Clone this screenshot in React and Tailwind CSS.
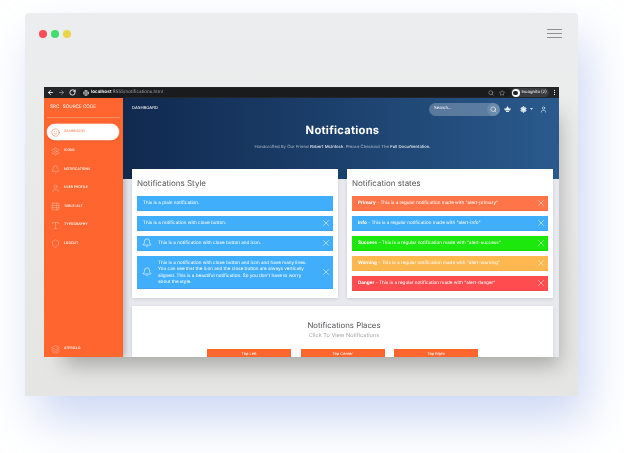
import React from "react";
import { ArrowLeft, ArrowRight, RotateCw, Search, Star, Bell, X, User, Settings, Smile, TableProperties, Type, Shield, Layers, Globe } from "lucide-react";

const nav = [
  [Settings, "ICONS"],
  [Bell, "NOTIFICATIONS"],
  [User, "USER PROFILE"],
  [TableProperties, "TABLE LIST"],
  [Type, "TYPOGRAPHY"],
  [Shield, "LOGOUT"],
];

const states = [
  ["Primary", "primary", "bg-[#ff7448]"],
  ["Info", "info", "bg-[#41aefc]"],
  ["Success", "success", "bg-[#1ce80e]"],
  ["Warning", "warning", "bg-[#ffb74f]"],
  ["Danger", "danger", "bg-[#ff4c4f]"],
];

function Alert({ color = "bg-[#41aefc]", icon, close = true, tall, children }) {
  return (
    <div className={`flex items-center text-white text-[4.6px] leading-[6.2px] ${color} ${tall ? "h-[33px]" : "h-[15px]"} border-b border-black/5 pr-[2px] ${icon ? "pl-[4.5px]" : "pl-[6px]"}`}>
      {icon && <Bell size={10} strokeWidth={1.5} className="mr-[6.5px] shrink-0" />}
      <div className="flex-1 whitespace-nowrap pt-[3px]">{children}</div>
      {close && <X size={10} strokeWidth={1.2} className="shrink-0" />}
    </div>
  );
}

function Card({ title, children }) {
  return (
    <div className="bg-white w-[206px] h-[129px] px-[5px] shadow-[0_1px_3px_rgba(0,0,0,0.12)]">
      <div className="h-[27px] pt-[9px] text-[#55555a] text-[8px] leading-[10px]">{title}</div>
      <div className="flex flex-col gap-[5px]">{children}</div>
    </div>
  );
}

export default function App() {
  return (
    <div className="w-[624px] h-[453px] overflow-hidden bg-white pt-[13px] pl-[25px] blur-[0.35px] font-['Inter',sans-serif] [text-rendering:geometricPrecision]">
      <div className="w-[553px] h-[383px] rounded-t-[4px] bg-gradient-to-b from-[#ecedee] to-[#e5e5e3] shadow-[10px_24px_48px_-2px_rgba(165,185,235,0.6)]">
        <div className="h-[74px] relative">
          <div className="flex gap-[4px] pl-[14px] pt-[17px]">
            <span className="w-[8px] h-[8px] rounded-full bg-[#ff4d57]" />
            <span className="w-[8px] h-[8px] rounded-full bg-[#3fdc6e]" />
            <span className="w-[8px] h-[8px] rounded-full bg-[#e9d547]" />
          </div>
          <div className="absolute right-[16px] top-[16px] flex flex-col gap-[3px] w-[15px]">
            <span className="h-[1px] bg-[#8d8f90]" />
            <span className="h-[1px] bg-[#8d8f90]" />
            <span className="h-[1px] bg-[#8d8f90]" />
          </div>
        </div>

        <div className="ml-[19px] w-[515px] h-[270px] shadow-[10px_18px_20px_-10px_rgba(0,0,0,0.28)]">
          <div className="w-full h-full overflow-hidden flex flex-col bg-[#e8e9ee]">
            {/* browser bar */}
            <div className="h-[11px] shrink-0 bg-[#242528] flex items-center text-white pl-[3px] pr-[3px]">
              <ArrowLeft size={7} strokeWidth={3} className="mr-[4px]" />
              <ArrowRight size={7} strokeWidth={2.5} className="mr-[4px] text-[#9a9a9a]" />
              <RotateCw size={7} strokeWidth={3} className="mr-[4px]" />
              <div className="flex-1 h-[9px] rounded-full bg-[#1a1b1d] flex items-center pl-[3px]">
                <Globe size={6} strokeWidth={2} className="mr-[2px]" />
                <span className="text-[4.6px] leading-none text-[#9aa0a6] whitespace-nowrap pt-[2px]"><b className="text-white font-semibold">localhost</b>:8555/notifications.html</span>
                <div className="flex-1" />
                <Search size={6} strokeWidth={2} className="mr-[5px] text-[#b5b5b5]" />
                <Star size={6} strokeWidth={2} className="mr-[7px] text-[#b5b5b5]" />
              </div>
              <div className="ml-[-1px] h-[9px] w-[38px] rounded-full bg-[#3a3b3f] flex items-center pl-[0.5px] mr-[5px]">
                <span className="w-[8px] h-[8px] rounded-full bg-white mr-[2px] flex items-center justify-center">
                  <span className="w-[5px] h-[4px] rounded-full bg-[#222]" />
                </span>
                <span className="text-[4.2px] leading-none whitespace-nowrap pt-[1px]">Incognito (2)</span>
              </div>
              <div className="flex flex-col gap-[1px] mr-[1px]">
                <span className="w-[1px] h-[1px] bg-white" />
                <span className="w-[1px] h-[1px] bg-white" />
                <span className="w-[1px] h-[1px] bg-white" />
              </div>
            </div>

            <div className="flex flex-1 min-h-0">
              {/* sidebar */}
              <div className="relative z-10 w-[79px] shrink-0 bg-[#ff652f] text-white flex flex-col px-[3px] shadow-[2px_0_6px_rgba(0,0,0,0.25)]">
                <div className="h-[19px] pl-[3px] pt-[7px] text-[4.6px] leading-[6px] whitespace-nowrap flex gap-[3.5px]">
                  <span>SRC</span><span>SOURCE CODE</span>
                </div>
                <div className="h-[1px] bg-white/25 mb-[6px]" />
                <div className="h-[16px] w-[72px] rounded-full bg-white flex items-center pl-[4px] text-[#ff7a4d] shadow-[0_0_0_0.5px_rgba(255,255,255,0.6),0_1px_2px_rgba(150,40,0,0.3)]">
                  <Smile size={9} strokeWidth={1.5} className="mr-[4px]" />
                  <span className="text-[3.4px] leading-none">DASHBOARD</span>
                </div>
                <div className="flex flex-col gap-[12.5px] mt-[8px]">
                  {nav.map(([I, label]) => (
                    <div key={label} className="h-[6px] flex items-center pl-[4px] text-white">
                      <I size={9} strokeWidth={1} className="mr-[4px] shrink-0 opacity-75" />
                      <span className="text-[3.4px] leading-none font-medium whitespace-nowrap">{label}</span>
                    </div>
                  ))}
                </div>
                <div className="flex-1" />
                <div className="h-[6px] mb-[5px] flex items-center pl-[4px]">
                  <Layers size={9} strokeWidth={1} className="mr-[4px] opacity-75" />
                  <span className="text-[3.4px] leading-none font-medium">ATPRO2.0</span>
                </div>
              </div>

              {/* main */}
              <div className="flex-1 min-w-0 flex flex-col">
                <div className="relative z-20 h-[81px] shrink-0 bg-gradient-to-r from-[#10294f] to-[#2a5a8d] text-white">
                  <div className="flex items-center h-[21px] pt-[1px] pl-[9px] pr-[12.5px]">
                    <span className="text-[4.2px] leading-none">DASHBOARD</span>
                    <div className="flex-1" />
                    <div className="relative h-[13px] w-[71px] rounded-full bg-white/25 flex items-center pl-[5px]">
                      <span className="text-[4.2px] leading-none">Search...</span>
                      <span className="absolute right-[0px] top-[0px] w-[13px] h-[13px] rounded-full bg-white/10 flex items-center justify-center">
                        <Search size={7} strokeWidth={2} />
                      </span>
                    </div>
                    <svg width="7" height="6" viewBox="0 0 7 6" className="ml-[3.5px] mr-[9px] text-white/90"><path d="M3.5 0 L5 2.5 H7 L6 4.5 H1 L0 2.5 H2 Z M2 5 H5 V6 H2 Z" fill="currentColor" /></svg>
                    <Settings size={7} strokeWidth={2.4} className="mr-[3px] fill-white/70" />
                    <svg width="3" height="2" viewBox="0 0 3 2" className="mr-[7px]"><path d="M0 0H3L1.5 2Z" fill="white" fillOpacity="0.8" /></svg>
                    <User size={7} strokeWidth={1.8} />
                  </div>
                  <div className="text-center mt-[4px] pl-[3px] text-[11.2px] leading-[14px] font-bold tracking-[0.25px]">Notifications</div>
                  <div className="text-center mt-[8px] pl-[3px] text-[4.3px] leading-[6px] text-white/60">
                    Handcrafted By Our Friend <span className="text-white">Robert McIntosh</span>. Please Checkout The <span className="text-white">Full Documentation.</span>
                  </div>
                </div>

                <div className="relative z-20 -mt-[10px] pl-[9px] flex flex-col gap-[8px]">
                  <div className="flex gap-[9px]">
                    <Card title="Notifications Style">
                      <Alert close={false}>This is a plain notification.</Alert>
                      <Alert>This is a notification with close button.</Alert>
                      <Alert icon>This is a notification with close button and icon.</Alert>
                      <Alert icon tall>
                        This is a notification with close button and icon and have many lines.<br />
                        You can see that the icon and the close button are always vertically<br />
                        aligned. This is a beautiful notification. So you don't have to worry<br />
                        about the style.
                      </Alert>
                    </Card>
                    <Card title="Notification states">
                      {states.map(([name, key, color]) => (
                        <Alert key={key} color={color}>
                          <b className="font-bold">{name}</b> - This is a regular notification made with "alert-{key}"
                        </Alert>
                      ))}
                    </Card>
                  </div>
                  <div className="bg-white w-[421px] h-[70px] pt-[14px] flex flex-col items-center shadow-[0_1px_3px_rgba(0,0,0,0.12)]">
                    <div className="text-[7.8px] leading-[10px] pl-[3px] text-[#55555a]">Notifications Places</div>
                    <div className="mt-[3px] text-[5.6px] leading-[7px] pl-[3px] text-[#a6a6aa]">Click To View Notifications</div>
                    <div className="mt-[9px] flex gap-[9.5px]">
                      {["Top Left", "Top Center", "Top Right"].map((t) => (
                        <div key={t} className="w-[84px] h-[16px] bg-[#ff652f] text-white text-[3.9px] leading-[10px] text-center">{t}</div>
                      ))}
                    </div>
                  </div>
                </div>
              </div>
            </div>
          </div>
        </div>
      </div>
    </div>
  );
}
